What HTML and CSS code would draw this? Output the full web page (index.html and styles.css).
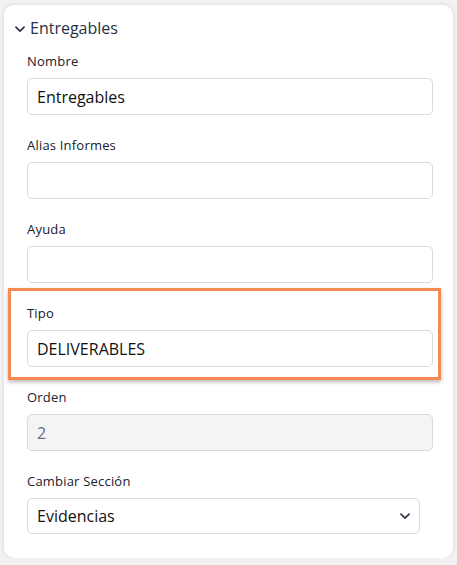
FILE: index.html
```html
<!DOCTYPE html>
<html lang="es">
<head>
<meta charset="utf-8">
<link rel="stylesheet" href="styles.css">
</head>
<body>
<div class="card">
  <div class="section-header">
    <svg class="chev" width="10" height="7" viewBox="0 0 10 7"><path d="M1 1.2 L5 5.2 L9 1.2" fill="none" stroke="#2d3748" stroke-width="1.7" stroke-linecap="round" stroke-linejoin="round"/></svg>
    <span class="section-title">Entregables</span>
  </div>
  <div class="fields">
    <div class="field">
      <label class="label">Nombre</label>
      <input class="input" type="text" value="Entregables">
    </div>
    <div class="field">
      <label class="label">Alias Informes</label>
      <input class="input" type="text" value="">
    </div>
    <div class="field">
      <label class="label">Ayuda</label>
      <input class="input" type="text" value="">
    </div>
    <div class="field field-highlight">
      <label class="label">Tipo</label>
      <input class="input" type="text" value="DELIVERABLES">
    </div>
    <div class="field">
      <label class="label">Orden</label>
      <input class="input input-disabled" type="text" value="2" disabled>
    </div>
    <div class="field">
      <label class="label">Cambiar Sección</label>
      <div class="select-wrap">
        <select class="select">
          <option>Evidencias</option>
        </select>
        <svg class="select-chev" width="10" height="7" viewBox="0 0 10 7"><path d="M1 1.2 L5 5.2 L9 1.2" fill="none" stroke="#2d3748" stroke-width="1.7" stroke-linecap="round" stroke-linejoin="round"/></svg>
      </div>
    </div>
  </div>
</div>
</body>
</html>
```

FILE: styles.css
```css
html, body {
  margin: 0;
  padding: 0;
  background: #f2f2f2;
}
body {
  padding: 5px 4px 0 4px;
  font-family: "Open Sans", "Liberation Sans", sans-serif;
}
.card {
  width: 449px;
  box-sizing: border-box;
  background: #ffffff;
  border-radius: 10px;
  box-shadow: 0 0 4px rgba(0, 0, 0, 0.12);
  padding: 13px 20px 24px 23px;
}
.section-header {
  display: flex;
  align-items: center;
  height: 20px;
  margin-left: -12px;
  gap: 5px;
}
.chev {
  display: block;
  margin-top: 2px;
}
.section-title {
  font-size: 16px;
  font-weight: 500;
  color: #283242;
  line-height: 20px;
}
.fields {
  margin-top: 14px;
  display: flex;
  flex-direction: column;
  gap: 21px;
}
.field {
  display: flex;
  flex-direction: column;
  gap: 8px;
}
.label {
  font-size: 13px;
  line-height: 18px;
  color: #1a202c;
  letter-spacing: 0.2px;
}
.input {
  box-sizing: border-box;
  width: 406px;
  height: 37px;
  border: 1px solid #d5dddc;
  border-radius: 5px;
  padding: 0 9px;
  font-family: inherit;
  font-size: 16px;
  color: #111111;
  background: #ffffff;
  outline: none;
  margin: 0;
}
.input-disabled {
  background: #f3f4f4;
  color: #6b6f80;
  -webkit-text-fill-color: #6b6f80;
  opacity: 1;
}
.field-highlight {
  margin: -16px -8px -13px -19px;
  padding: 13px 5px 10px 16px;
  border: 3px solid #f58a52;
  box-shadow: 0 2px 4px rgba(0, 0, 0, 0.28);
}
.select-wrap {
  position: relative;
  width: 393px;
}
.select {
  -webkit-appearance: none;
  appearance: none;
  box-sizing: border-box;
  width: 393px;
  height: 36px;
  border: 1px solid #d5dddc;
  border-radius: 5px;
  padding: 0 9px;
  font-family: inherit;
  font-size: 16px;
  color: #111111;
  background: #ffffff;
  outline: none;
  margin: 0;
}
.select-chev {
  position: absolute;
  right: 10px;
  top: 15px;
}
```
